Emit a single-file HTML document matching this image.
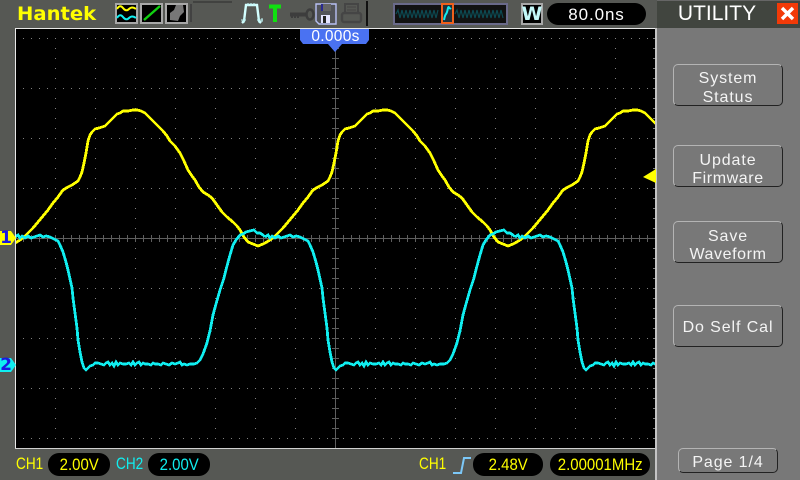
<!DOCTYPE html>
<html><head><meta charset="utf-8"><style>
html,body{margin:0;padding:0;background:#555753}
#r{position:relative;width:800px;height:480px;overflow:hidden;background:#565854;font-family:"Liberation Sans",sans-serif}
.a{position:absolute}
.t{position:absolute;left:673px;width:110px;white-space:pre;text-align:center;line-height:18px;color:#f4f4f4;font-size:16px;letter-spacing:.9px}
.b{position:absolute;left:673px;width:108px;border:1px solid #b4b4b4;border-right-color:#222;border-bottom-color:#222;border-radius:5px}
.p{position:absolute;background:#000;border-radius:11px;text-align:center;height:23px;font-size:17px;line-height:24px}
.p span,.l{display:inline-block;transform:scaleX(.88)}
.l{position:absolute;top:455px;font-size:17px;line-height:18px;transform:scaleX(.8);transform-origin:0 50%}
</style></head><body><div id="r">
<div class="a" style="left:657px;top:0;width:143px;height:480px;background:#787878"></div>
<div class="a" style="left:657px;top:0;width:143px;height:28px;background:#41453f;border-top:1px solid #666;box-sizing:border-box"></div>
<div class="a" style="left:657px;top:1px;width:120px;height:26px;color:#fff;font-size:21px;line-height:26px;text-align:center">UTILITY</div>
<div class="a" style="left:777px;top:3px;width:21px;height:21px;background:#f23a08"></div>
<svg class="a" style="left:777px;top:3px" width="21" height="21"><path d="M5 5L16 16M16 5L5 16" stroke="#fff" stroke-width="3.4"/></svg>

<svg class="a" style="left:0;top:0" width="800" height="480">
<defs>
<pattern id="h" x="23" y="38" width="8" height="50" patternUnits="userSpaceOnUse"><rect width="1" height="1" fill="#808080"/></pattern>
<pattern id="v" x="15" y="38" width="40" height="10" patternUnits="userSpaceOnUse"><rect width="1" height="1" fill="#808080"/></pattern>
<pattern id="tx" x="23" y="235" width="8" height="7" patternUnits="userSpaceOnUse"><rect width="1" height="7" fill="#5e5e5e"/></pattern>
<pattern id="ty" x="332" y="38" width="7" height="10" patternUnits="userSpaceOnUse"><rect width="7" height="1" fill="#5e5e5e"/></pattern>
<pattern id="ry" x="653" y="38" width="2" height="10" patternUnits="userSpaceOnUse"><rect width="2" height="1" fill="#808080"/></pattern>
<clipPath id="c"><rect x="16" y="29" width="639" height="419"/></clipPath>
<polyline id="y" fill="none" stroke="#ffff00" stroke-width="2.8" points="15,243 20,240 24,237 28,233 33,228 38,222 43,216 48,210 53,203 58,197 63,190 68,187 72,185 75,183 78,181 80,177 82,172 84,163 86,153 88,141 90,135 92,132 95,129 99,128 102,127 105,126 108,123 112,119 117,114 120,113 123,111 128,111 133,110 137,110 141,111 145,113 149,117 153,121 158,126 163,131 167,136 170,141 175,146 180,153 184,161 188,170 192,176 195,180 199,187 203,192 208,195 212,198 217,205 222,212 227,217 233,222 237,226 240,230 244,237 248,242 253,244 258,246 263,244 265,243"/>
<polyline id="q" fill="none" stroke="#10eef0" stroke-width="2.8" points="15,237 18,235 20,238 22,236 25,238 28,236 31,238 34,237 37,236 40,235 43,237 46,236 50,237 54,239 58,241 60,245 63,252 66,262 68,270 70,279 72,288 73,298 75,313 77,328 78,340 80,352 82,362 84,368 86,370 88,368 90,366 93,365 95,363 98,363 101,364 104,365 106,363 108,362 110,365 112,363 114,366 116,362 118,365 120,363 123,364 126,364 129,363 131,365 133,362 135,365 137,363 139,362 141,365 143,363 145,364 148,364 151,365 153,363 155,364 158,364 161,365 163,363 166,364 169,365 172,363 175,364 178,363 180,362 182,365 184,364 187,365 190,364 194,364 197,363 200,360 203,354 207,343 210,331 213,315 216,304 220,290 224,278 227,266 230,255 233,245 236,240 240,235 243,234 246,232 250,231 254,230 257,233 260,233 263,235 265,237"/>
</defs>
<rect x="15" y="28" width="641" height="421" fill="#000"/>
<rect x="16" y="38" width="639" height="401" fill="url(#h)" />
<rect x="16" y="38" width="639" height="401" fill="url(#v)"/>
<rect x="653" y="38" width="2" height="401" fill="url(#ry)"/>
<rect x="16" y="238" width="639" height="1" fill="#5e5e5e"/>
<rect x="16" y="235" width="639" height="7" fill="url(#tx)"/>
<rect x="335" y="29" width="1" height="419" fill="#5e5e5e"/>
<rect x="332" y="38" width="7" height="401" fill="url(#ty)"/>
<rect x="15" y="28" width="641" height="1" fill="#e8e8e8"/>
<rect x="15" y="28" width="1" height="421" fill="#e8e8e8"/>
<rect x="15" y="448" width="641" height="1" fill="#d0d0d0"/>
<rect x="655" y="28" width="2" height="452" fill="#c4c4c4"/>
<g clip-path="url(#c)" shape-rendering="crispEdges">
<use href="#y"/><use href="#y" x="250"/><use href="#y" x="500"/>
<use href="#q"/><use href="#q" x="250"/><use href="#q" x="500"/>
</g>

<path d="M0 231H11L16 238L11 245H0Z" fill="#ffff00"/>
<path d="M0 358H11L16 365L11 372H0Z" fill="#10eef0"/>
<path d="M656 169V183L643 177Z" fill="#ffff00"/>

<path d="M300 29H369V40L366 44H342L335 52L328 44H303L300 40Z" fill="#4a72f2"/>

<rect x="116" y="4" width="21" height="19" fill="#000" stroke="#a8a8a8" stroke-width="2"/>
<path d="M117 9Q120 4 123 8T129 9T136 9" fill="none" stroke="#ffff00" stroke-width="2"/>
<path d="M117 18Q120 13 123 17T129 18T136 18" fill="none" stroke="#10eef0" stroke-width="2"/>
<rect x="141" y="4" width="21" height="19" fill="#000" stroke="#a8a8a8" stroke-width="2"/>
<path d="M144 20L160 6" stroke="#10d010" stroke-width="2.4"/>
<rect x="166" y="4" width="21" height="19" fill="#000" stroke="#a8a8a8" stroke-width="2"/>
<path d="M170 20V13L174 10L176 5H183L184 12L180 16L178 21Z" fill="#777"/>
<path d="M193 2H232M191 4V22" fill="none" stroke="#3a3a3a" stroke-width="1.4"/>

<path d="M242 23L244 21L246 5H257L259 21L261 23" fill="none" stroke="#d4ffff" stroke-width="2.4"/>
<path d="M248 3V6M251 3V6M254 3V6M241 20H246M257 20H263M244 17V23M259 17V23M262 18V22" stroke="#c0f4f4" stroke-width="1"/>
<path d="M269 6.500H281M275 6V22" stroke="#10e010" stroke-width="4"/>
<path d="M290 14.500H306" stroke="#3d3d3d" stroke-width="4"/><path d="M292 15V18M295 15V18M298 15V18" stroke="#3d3d3d" stroke-width="2"/>
<ellipse cx="310" cy="14.500" rx="3.500" ry="5" fill="none" stroke="#3d3d3d" stroke-width="2.500"/>
<path d="M316 4H336V24H319L316 21Z" fill="#52545a" stroke="#b8c0f4" stroke-width="1.400"/>
<rect x="321" y="4" width="10" height="7" fill="#666"/><rect x="321" y="4" width="2" height="7" fill="#2a2a90"/>
<rect x="321" y="15" width="9" height="8" fill="#e4e4ff"/><rect x="323" y="16" width="3" height="7" fill="#222"/>
<rect x="345" y="4" width="13" height="9" fill="none" stroke="#454545" stroke-width="2"/>
<rect x="342" y="13" width="19" height="9" rx="2" fill="none" stroke="#454545" stroke-width="2.400"/>
<path d="M347 7H356M347 10H356" stroke="#454545"/>
<rect x="366" y="1" width="2" height="25" fill="#111"/>

<rect x="394" y="4" width="113" height="20" fill="#121212" stroke="#6a6a8a" stroke-width="2"/>
<path d="M396 14 l2 -4 l2 8 l2 -8 l2 8 l2 -8 l2 8 l2 -8 l2 8 l2 -8 l2 8 l2 -8 l2 8 l2 -8 l2 8 l2 -8 l2 8 l2 -8 l2 8 l2 -8 l2 8 l2 -8 M455 14 l2 -4 l2 8 l2 -8 l2 8 l2 -8 l2 8 l2 -8 l2 8 l2 -8 l2 8 l2 -8 l2 8 l2 -8 l2 8 l2 -8 l2 8 l2 -8 l2 8 l2 -8 l2 8 l2 -8 l2 8 l2 -8 l2 8" fill="none" stroke="#0c4a52" stroke-width="1.200"/>
<rect x="442" y="4" width="11" height="19" fill="#20303a" stroke="#f0601c" stroke-width="2"/>
<path d="M444 20C446 10 446 18 448 8C449 5 449 10 451 8" fill="none" stroke="#10eef0" stroke-width="2"/>
<rect x="522" y="4" width="20" height="20" fill="#000" stroke="#a8a8a8" stroke-width="2"/>
<path d="M453 473H461L464 458H471" fill="none" stroke="#7cc8f8" stroke-width="2"/>
</svg>

<div class="a" style="left:17px;top:2px;font:bold 19px/24px 'DejaVu Sans',sans-serif;color:#ffff00;transform-origin:0 50%;transform:scaleX(1.03)">Hantek</div>
<div class="a" style="left:0;top:229px;width:12px;font:bold 17px/18px 'DejaVu Sans',sans-serif;color:#1a1ae0;text-align:center">1</div>
<div class="a" style="left:0;top:356px;width:12px;font:bold 17px/18px 'DejaVu Sans',sans-serif;color:#1a1ae0;text-align:center">2</div>
<div class="a" style="left:301px;top:28px;width:69px;font-size:15.500px;line-height:18px;color:#fff;text-align:center;letter-spacing:.3px">0.000s</div>
<div class="a" style="left:521px;top:3px;width:22px;font:bold 19px/22px 'DejaVu Sans',sans-serif;color:#c4f8f8;text-align:center">W</div>
<div class="p" style="left:547px;top:3px;width:99px;height:22px;line-height:23px;color:#fff;font-size:17px;letter-spacing:.9px">80.0ns</div>

<div class="b" style="top:64px;height:40px"></div>
<div class="t" style="top:70px">System</div><div class="t" style="top:89px">Status</div>
<div class="b" style="top:145px;height:40px"></div>
<div class="t" style="top:152px">Update</div><div class="t" style="top:170px;letter-spacing:.6px">Firmware</div>
<div class="b" style="top:221px;height:40px"></div>
<div class="t" style="top:228px">Save</div><div class="t" style="top:246px;letter-spacing:.6px">Waveform</div>
<div class="b" style="top:305px;height:40px"></div>
<div class="t" style="top:319px">Do Self Cal</div>
<div class="b" style="left:678px;top:448px;width:98px;height:23px"></div>
<div class="t" style="left:678px;width:100px;top:454px">Page 1/4</div>

<div class="l" style="left:16px;color:#ffff00">CH1</div>
<div class="p" style="left:48px;top:453px;width:62px;color:#ffff00"><span>2.00V</span></div>
<div class="l" style="left:116px;color:#10eef0">CH2</div>
<div class="p" style="left:148px;top:453px;width:62px;color:#10eef0"><span>2.00V</span></div>
<div class="l" style="left:419px;color:#ffff00">CH1</div>
<div class="p" style="left:473px;top:453px;width:70px;color:#ffff00"><span>2.48V</span></div>
<div class="p" style="left:550px;top:453px;width:100px;color:#ffff00"><span style="white-space:nowrap;margin:0 -10px">2.00001MHz</span></div>
</div></body></html>
